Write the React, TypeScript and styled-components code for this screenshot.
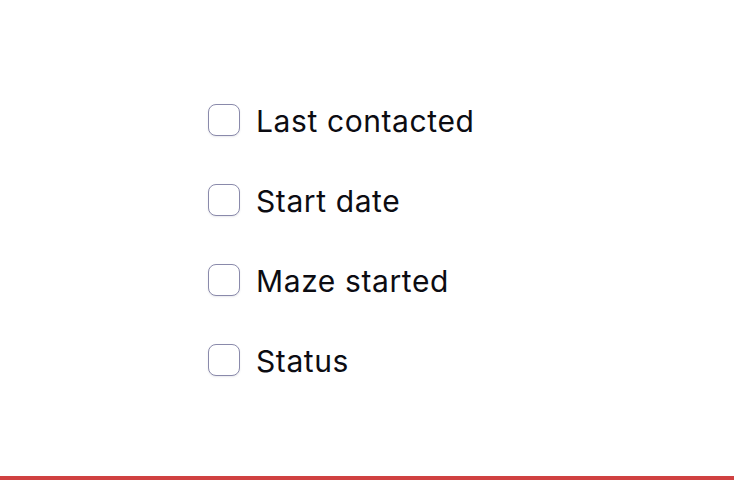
import React, { useState } from "react";
import styled, { createGlobalStyle } from "styled-components";

const GlobalStyle = createGlobalStyle`
  html, body {
    margin: 0;
    padding: 0;
    background: #ffffff;
  }
  body {
    font-family: Inter, "Noto Sans", sans-serif;
    color: #0c0c12;
  }
`;

const Page = styled.div`
  width: 734px;
  height: 480px;
  display: flex;
  flex-direction: column;
  box-sizing: border-box;
`;

const Content = styled.main`
  flex: 1;
  padding: 104px 0 0 208px;
`;

const List = styled.ul`
  list-style: none;
  margin: 0;
  padding: 0;
  display: flex;
  flex-direction: column;
  gap: 48px;
`;

const Item = styled.li`
  display: flex;
  align-items: center;
  gap: 16px;
  height: 32px;
`;

const Box = styled.button<{ $checked: boolean }>`
  width: 32px;
  height: 32px;
  flex-shrink: 0;
  box-sizing: border-box;
  padding: 0;
  border: 1px solid #8a8aab;
  border-radius: 8px;
  background: ${(p) => (p.$checked ? "#2b2bd0" : "#ffffff")};
  box-shadow: 0 1px 2px rgba(40, 40, 80, 0.1);
  cursor: pointer;
`;

const Label = styled.span`
  font-size: 30px;
  font-weight: 400;
  letter-spacing: 0.6px;
  line-height: 32px;
  padding-top: 2px;
  color: #0c0c12;
`;

const Footer = styled.div`
  height: 4px;
  background: #d04141;
`;

const fields = ["Last contacted", "Start date", "Maze started", "Status"];

export default function App() {
  const [checked, setChecked] = useState<Record<string, boolean>>({});

  return (
    <>
      <GlobalStyle />
      <Page>
        <Content>
          <List>
            {fields.map((f) => (
              <Item key={f}>
                <Box
                  type="button"
                  aria-label={f}
                  $checked={!!checked[f]}
                  onClick={() => setChecked((c) => ({ ...c, [f]: !c[f] }))}
                />
                <Label>{f}</Label>
              </Item>
            ))}
          </List>
        </Content>
        <Footer />
      </Page>
    </>
  );
}
